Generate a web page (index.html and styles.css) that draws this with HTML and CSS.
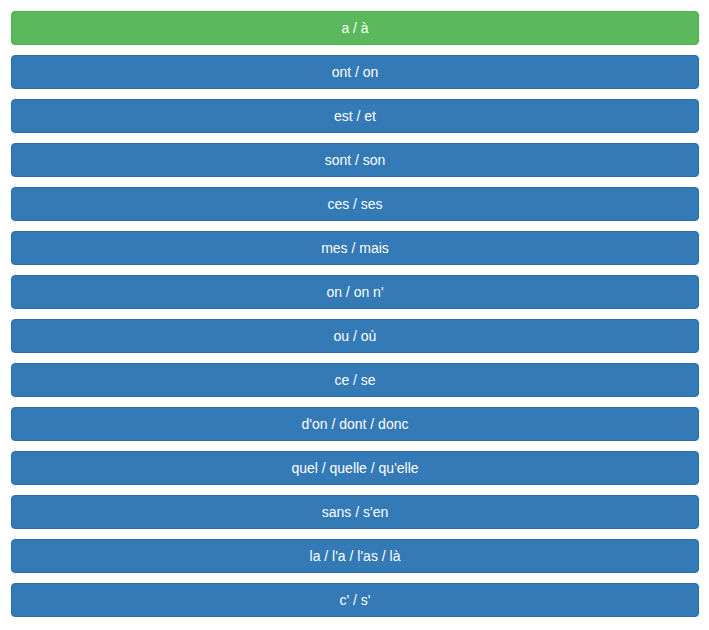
FILE: index.html
```html
<!DOCTYPE html>
<html lang="fr">
<head>
<meta charset="utf-8">
<link rel="stylesheet" href="styles.css">
</head>
<body>
<div class="list">
  <button class="btn btn-success">a / à</button>
  <button class="btn">ont / on</button>
  <button class="btn">est / et</button>
  <button class="btn">sont / son</button>
  <button class="btn">ces / ses</button>
  <button class="btn">mes / mais</button>
  <button class="btn">on / on n'</button>
  <button class="btn">ou / où</button>
  <button class="btn">ce / se</button>
  <button class="btn">d'on / dont / donc</button>
  <button class="btn">quel / quelle / qu'elle</button>
  <button class="btn">sans / s'en</button>
  <button class="btn">la / l'a / l'as / là</button>
  <button class="btn">c' / s'</button>
</div>
</body>
</html>
```

FILE: styles.css
```css
html, body {
  margin: 0;
  padding: 0;
  background: #fff;
}
body {
  font-family: "Liberation Sans", Arial, sans-serif;
  font-size: 14px;
  line-height: 1.42857143;
}
.list {
  display: flex;
  flex-direction: column;
  gap: 10px;
  padding: 11px 10px 11px 11px;
}
.btn {
  display: block;
  width: 100%;
  box-sizing: border-box;
  height: 34px;
  padding: 6px 12px;
  font-family: inherit;
  font-size: 14px;
  line-height: 20px;
  color: #fff;
  background: #337ab7;
  border: 1px solid #2e6da4;
  border-radius: 4px;
  text-align: center;
  cursor: pointer;
}
.btn-success {
  background: #5cb85c;
  border-color: #4cae4c;
}
```
